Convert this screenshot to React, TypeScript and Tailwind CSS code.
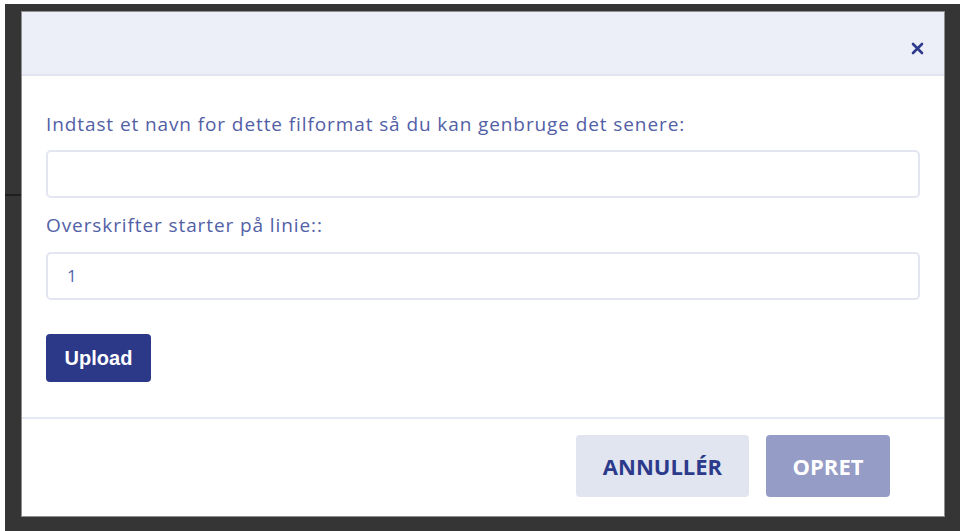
import React from "react";

export default function App() {
  const labelFont = { fontFamily: '"Open Sans", "Noto Sans", sans-serif' };
  return (
    <div className="w-[965px] h-[531px] bg-white pl-[5px] pr-[5px] pt-[4px] flex">
      <div className="relative flex-1 bg-[#353535] pl-[16px] pr-[15px] pt-[7px] pb-[14px] flex">
        <div className="absolute left-0 top-[190px] w-[16px] h-[2px] bg-[#1f1f1f]" />
        <div className="relative flex-1 bg-white flex flex-col border border-[#8f8f8f]">
          <div className="h-[64px] bg-[#eceef8] border-b-2 border-[#e1e4f0] flex items-center justify-end pr-[20px]">
            <svg width="13" height="13" viewBox="0 0 13 13" className="mt-[10px]">
              <path d="M2 2 L11 11 M11 2 L2 11" stroke="#2e3b8c" strokeWidth="2.6" strokeLinecap="round" />
            </svg>
          </div>
          <div className="flex flex-col px-[24px] pt-[36px]" style={labelFont}>
            <div className="text-[19px] leading-[24px] tracking-[0.9px] text-[#5260a6]">
              Indtast et navn for dette filformat så du kan genbruge det senere:
            </div>
            <div className="mt-[14px] h-[48px] rounded-[5px] border-2 border-[#e3e6f1]" />
            <div className="mt-[15px] text-[19px] leading-[24px] tracking-[0.9px] text-[#5260a6]">
              Overskrifter starter på linie::
            </div>
            <div className="mt-[15px] h-[48px] rounded-[5px] border-2 border-[#e3e6f1] flex items-center pl-[19px] text-[17px] text-[#5864aa]">
              1
            </div>
            <div className="mt-[34px]">
              <button
                className="w-[105px] h-[48px] rounded-[4px] bg-[#2c3988] text-white font-bold text-[20px]"
                style={{ fontFamily: '"Liberation Sans", Arial, sans-serif' }}
              >
                Upload
              </button>
            </div>
          </div>
          <div className="mt-[35px] border-t-2 border-[#e6e9f3] flex justify-end gap-[17px] pr-[54px] pt-[16px]">
            <button
              className="w-[173px] h-[62px] rounded-[4px] bg-[#e1e5ef] text-[#2b3a8a] font-bold text-[22px]"
              style={labelFont}
            >
              ANNULLÉR
            </button>
            <button
              className="w-[124px] h-[62px] rounded-[4px] bg-[#959cc5] text-white font-bold text-[22px]"
              style={labelFont}
            >
              OPRET
            </button>
          </div>
        </div>
      </div>
    </div>
  );
}
